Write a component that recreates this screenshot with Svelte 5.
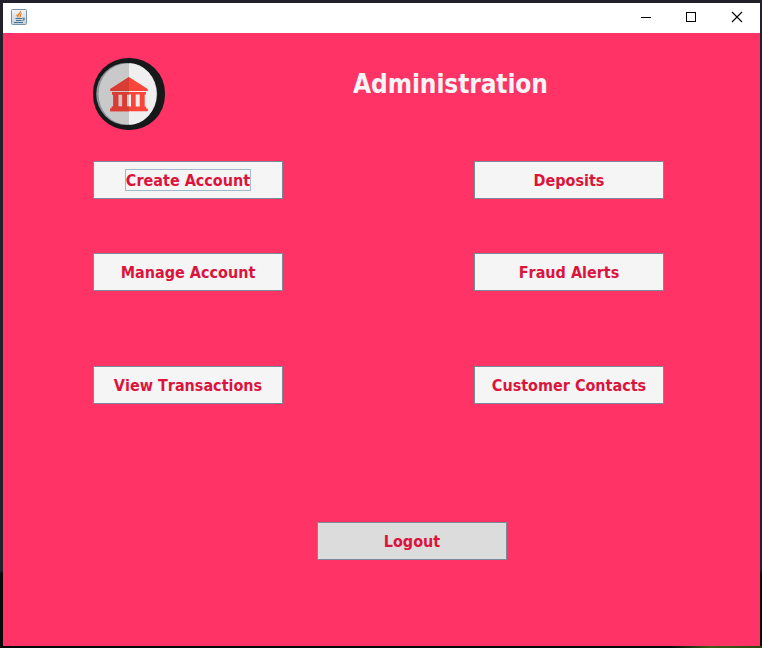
<script>
  const rows = [
    ['Create Account', 'Deposits'],
    ['Manage Account', 'Fraud Alerts'],
    ['View Transactions', 'Customer Contacts'],
  ];
</script>

<div class="desktop">
  <div class="window">
    <div class="titlebar">
      <svg class="java" width="16" height="16" viewBox="0 0 16 16">
        <defs>
          <linearGradient id="jbg" x1="0" y1="0" x2="0" y2="1">
            <stop offset="0" stop-color="#f2f5f7" />
            <stop offset="1" stop-color="#c3d0d8" />
          </linearGradient>
        </defs>
        <rect x="0.5" y="0.5" width="15" height="15" rx="1" fill="url(#jbg)" stroke="#7794aa" />
        <path d="M9.6 2C10 4 6.3 4.7 7.3 7.2M10.8 4.5C8.8 5.2 9 6 9.4 6.8 9.6 7.5 9 8 8.5 8.3M6.2 5.5C5.4 6.7 6.6 7.5 7.3 8.4" fill="none" stroke="#e8812c" stroke-width="1.3" />
        <path d="M4.5 9.5H11M5 11.5H10.5M3 13.5H12M11.3 9.3C14.3 8.8 13.6 11 11.3 11.5" fill="none" stroke="#42718f" stroke-width="1.1" />
      </svg>
      <div class="controls">
        <svg width="46" height="30" viewBox="0 0 46 30" shape-rendering="crispEdges"><path d="M19 14.5H29" stroke="#000" /></svg>
        <svg width="46" height="30" viewBox="0 0 46 30" shape-rendering="crispEdges"><rect x="18.5" y="9.5" width="9" height="9" fill="none" stroke="#000" /></svg>
        <svg width="46" height="30" viewBox="0 0 46 30"><path d="M18 9L28 19M28 9L18 19" stroke="#000" stroke-width="1.1" /></svg>
      </div>
    </div>

    <main>
      <header>
        <svg class="logo" width="72" height="72" viewBox="0 0 72 72">
          <rect width="72" height="72" rx="35" fill="#17181a" />
          <ellipse cx="33.7" cy="36" rx="30.5" ry="31" fill="#8b9299" />
          <ellipse cx="34.3" cy="36" rx="28.8" ry="30.6" fill="#c9c9c9" />
          <path d="M36 5.2A27.5 30.7 0 0 1 36 66.8Z" fill="#efefef" />
          <g fill="#f9453a">
            <path d="M36 19L54.7 31V33H17.3V31Z" />
            <path d="M19 34H53V36.5H19ZM20.3 36H25.3V49H20.3ZM29.3 36H34V49H29.3ZM38 36H42.7V49H38ZM46.7 36H51.7V49H46.7ZM18.8 48.6H53.2V51H18.8ZM17.2 50.5H54.8V53.3H17.2Z" />
          </g>
          <g fill="#d83c33">
            <path d="M36 19V33H17.3V31Z" />
            <path d="M19 34H36V36.5H19ZM20.3 36H25.3V49H20.3ZM29.3 36H34V49H29.3ZM18.8 48.6H36V51H18.8ZM17.2 50.5H36V53.3H17.2Z" />
          </g>
        </svg>
        <h1>Administration</h1>
      </header>

      <div class="menu">
        {#each rows as row}
          <div class="row">
            {#each row as label}
              <button class:focused={label === 'Create Account'}><span>{label}</span></button>
            {/each}
          </div>
        {/each}
      </div>

      <button class="logout"><span>Logout</span></button>
    </main>
  </div>
</div>

<style>
  .desktop {
    box-sizing: border-box;
    width: 762px;
    height: 648px;
    padding: 3px 2px 2px 3px;
    background:
      linear-gradient(90deg, transparent 670px, #425b16 710px, #304411) 0 646px / 100% 2px no-repeat,
      linear-gradient(#22202a 0 570px, #080808 574px);
    font-family: 'DejaVu Sans Condensed', 'DejaVu Sans', sans-serif;
    font-stretch: condensed;
  }
  .window {
    width: 757px;
    height: 643px;
    background: #ff3366;
  }
  .titlebar {
    display: flex;
    justify-content: space-between;
    height: 30px;
    background: #fff;
  }
  .java { margin: 6px 0 0 8px; }
  .controls { display: flex; }
  .controls svg { display: block; }
  main { padding: 25px 96px 0 90px; }
  header { display: flex; height: 72px; }
  h1 {
    margin: 9px 0 0 188px;
    font-size: 26px;
    line-height: 34px;
    font-weight: bold;
    letter-spacing: -0.1px;
    color: #f5f5f5;
    white-space: nowrap;
  }
  .menu { margin-top: 31px; }
  .row {
    display: flex;
    justify-content: space-between;
    margin-bottom: 54px;
  }
  .row:nth-child(2) { margin-bottom: 75px; }
  .row:last-child { margin-bottom: 0; }
  button {
    box-sizing: border-box;
    display: flex;
    align-items: center;
    justify-content: center;
    width: 190px;
    height: 38px;
    padding: 0;
    border: 1px solid #7a8a99;
    border-radius: 0;
    background: #f5f5f5;
    color: #dc143c;
    font-family: inherit;
    font-stretch: condensed;
    font-kerning: none;
    font-size: 16px;
    font-weight: bold;
    line-height: 19px;
    white-space: nowrap;
  }
  span {
    padding-top: 1px;
    border: 1px solid transparent;
  }
  .focused span { border-color: #a3b8cc; }
  .logout {
    margin: 118px 0 0 224px;
    background: #dcdcdc;
  }
</style>
